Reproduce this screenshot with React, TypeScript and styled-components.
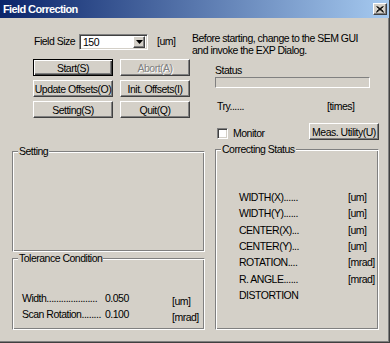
import React from 'react'
import styled, { createGlobalStyle, css } from 'styled-components'

const FACE = '#d4d0c8'
const SHADOW = '#808080'
const DARK = '#404040'

const GlobalStyle = createGlobalStyle`
    html, body {
        margin: 0;
        padding: 0;
        background: ${FACE};
    }
    body {
        font-family: "Liberation Sans", Arial, sans-serif;
        font-size: 10.5px;
        letter-spacing: -0.5px;
        color: #000;
    }
`

const raised = css`
    border: 1px solid;
    border-color: #fff ${DARK} ${DARK} #fff;
    box-shadow: inset -1px -1px ${SHADOW};
    background: ${FACE};
`

const Window = styled.div`
    box-sizing: border-box;
    width: 390px;
    height: 343px;
    background: ${FACE};
    border-right: 1px solid ${DARK};
    border-bottom: 1px solid ${DARK};
    box-shadow: inset -1px -1px ${SHADOW};
    display: flex;
    flex-direction: column;
    overflow: hidden;
`

const TitleBar = styled.div`
    height: 18px;
    flex: none;
    display: flex;
    align-items: center;
    padding: 0 3px 0 3px;
    background: linear-gradient(to right, #0a246a, #a6caf0);
`

const TitleText = styled.span`
    color: #fff;
    font-weight: bold;
    font-size: 11px;
    letter-spacing: -0.6px;
    line-height: 18px;
`

const CloseButton = styled.div`
    ${raised};
    box-sizing: border-box;
    width: 14px;
    height: 12px;
    margin-left: auto;
    margin-right: -1px;
    display: flex;
    align-items: center;
    justify-content: center;
`

const Body = styled.div`
    flex: 1;
    padding: 14px 8px 0 12px;
`

const Header = styled.div`
    display: flex;
    align-items: flex-start;
    height: 24px;
    padding-left: 22px;
`

const FieldLabel = styled.span`
    width: 45px;
    flex: none;
    margin-top: 3px;
    line-height: 12px;
    white-space: nowrap;
`

const Combo = styled.div`
    box-sizing: border-box;
    width: 69px;
    height: 16px;
    margin-top: 2px;
    flex: none;
    display: flex;
    align-items: center;
    background: #fff;
    border: 1px solid;
    border-color: ${SHADOW} #fff #fff ${SHADOW};
    box-shadow: inset 1px 1px ${DARK}, inset -1px -1px ${FACE};
    padding: 0 2px 0 3px;
`

const ComboValue = styled.span`
    flex: 1;
    line-height: 12px;
`

const ComboArrow = styled.div`
    ${raised};
    box-sizing: border-box;
    width: 12px;
    height: 12px;
    display: flex;
    align-items: center;
    justify-content: center;
`

const HeadUnit = styled.span`
    width: 44px;
    flex: none;
    box-sizing: border-box;
    padding-left: 9px;
    margin-top: 3px;
    line-height: 12px;
`

const Note = styled.div`
    line-height: 12px;
    white-space: nowrap;
`

const Main = styled.div`
    display: grid;
    grid-template-columns: 193px 164px;
    column-gap: 10px;
`

const Column = styled.div`
    display: flex;
    flex-direction: column;
`

const ButtonGrid = styled.div`
    display: grid;
    grid-template-columns: 80px 70px;
    grid-auto-rows: 17px;
    column-gap: 7px;
    row-gap: 4px;
    margin: 3px 0 0 21px;
`

const Button = styled.div<{ $default?: boolean; $disabled?: boolean; $width?: number }>`
    ${raised};
    box-sizing: border-box;
    height: 17px;
    ${p => p.$width && `width: ${p.$width}px;`}
    display: flex;
    align-items: center;
    justify-content: center;
    line-height: 12px;
    white-space: nowrap;
    ${p => p.$default && css`
        border-color: #000;
        box-shadow: inset 1px 1px #fff, inset -1px -1px ${DARK}, inset -2px -2px ${SHADOW};
    `}
    ${p => p.$disabled && css`
        color: ${SHADOW};
        text-shadow: 1px 1px #fff;
    `}
`

const Group = styled.div<{ $height: number; $top?: number }>`
    display: flex;
    flex-direction: column;
    height: ${p => p.$height}px;
    margin-top: ${p => p.$top ?? 0}px;
`

const GroupHead = styled.div`
    display: flex;
    height: 12px;
    flex: none;
`

const HeadLine = styled.div<{ $side: 'left' | 'right' }>`
    margin-top: 6px;
    border-top: 1px solid ${SHADOW};
    ${p => p.$side === 'left'
        ? css`
            width: 5px;
            flex: none;
            border-left: 1px solid ${SHADOW};
            box-shadow: inset 1px 1px #fff;
        `
        : css`
            flex: 1;
            border-right: 1px solid #fff;
            box-shadow: inset 0 1px #fff, inset -1px 0 ${SHADOW};
        `}
`

const Legend = styled.span`
    padding: 0 1px;
    line-height: 12px;
    white-space: nowrap;
`

const GroupBody = styled.div<{ $padTop?: number; $padLeft?: number }>`
    flex: 1;
    border-left: 1px solid ${SHADOW};
    border-right: 1px solid #fff;
    border-bottom: 1px solid #fff;
    box-shadow: inset 1px 0 #fff, inset -1px -1px ${SHADOW};
    padding-top: ${p => p.$padTop ?? 0}px;
    padding-left: ${p => p.$padLeft ?? 0}px;
`

const StatusLabel = styled.span`
    margin-top: 8px;
    line-height: 12px;
`

const StatusBox = styled.div`
    box-sizing: border-box;
    width: 155px;
    height: 11px;
    margin-top: 1px;
    border: 1px solid;
    border-color: ${SHADOW} #fff #fff ${SHADOW};
`

const TryRow = styled.div`
    display: grid;
    grid-template-columns: 110px auto;
    margin-top: 12px;
    padding-left: 2px;
    line-height: 12px;
`

const MonitorRow = styled.div`
    display: flex;
    align-items: center;
    height: 17px;
    margin-top: 11px;
    padding-left: 2px;
`

const CheckBox = styled.div`
    box-sizing: border-box;
    width: 11px;
    height: 11px;
    background: #fff;
    border: 1px solid;
    border-color: ${SHADOW} #fff #fff ${SHADOW};
    box-shadow: inset 1px 1px ${DARK}, inset -1px -1px ${FACE};
    margin-top: 3px;
`

const CheckLabel = styled.span`
    margin: 3px auto 0 5px;
    line-height: 12px;
`

const DataTable = styled.div<{ $cols: string; $row: number }>`
    display: grid;
    grid-template-columns: ${p => p.$cols};
    grid-auto-rows: ${p => p.$row}px;
    align-items: center;
    line-height: 12px;
`

const DataCell = styled.span<{ $drop?: number }>`
    white-space: nowrap;
    padding-top: ${p => p.$drop ?? 0}px;
`

const correcting: [string, string][] = [
    ['WIDTH(X)......', '[um]'],
    ['WIDTH(Y)......', '[um]'],
    ['CENTER(X)...', '[um]'],
    ['CENTER(Y)...', '[um]'],
    ['ROTATION....', '[mrad]'],
    ['R. ANGLE......', '[mrad]'],
]

const tolerance = [
    { label: 'Width.....................', value: '0.050', unit: '[um]' },
    { label: 'Scan Rotation........', value: '0.100', unit: '[mrad]' },
]

const GroupBox: React.FC<{
    title: string
    height: number
    top?: number
    padTop?: number
    padLeft?: number
    children?: React.ReactNode
}> = ({ title, height, top, padTop, padLeft, children }) => (
    <Group $height={height} $top={top}>
        <GroupHead>
            <HeadLine $side="left" />
            <Legend>{title}</Legend>
            <HeadLine $side="right" />
        </GroupHead>
        <GroupBody $padTop={padTop} $padLeft={padLeft}>
            {children}
        </GroupBody>
    </Group>
)

export default function App() {
    return (
        <>
            <GlobalStyle />
            <Window>
                <TitleBar>
                    <TitleText>Field Correction</TitleText>
                    <CloseButton>
                        <svg width="8" height="7" viewBox="0 0 8 7">
                            <path d="M0.5 0.5 L7.5 6.5 M1.5 0.5 L7.5 5.5 M7.5 0.5 L0.5 6.5 M6.5 0.5 L0.5 5.5" stroke="#000" strokeWidth="1" fill="none" />
                        </svg>
                    </CloseButton>
                </TitleBar>

                <Body>
                    <Header>
                        <FieldLabel>Field Size</FieldLabel>
                        <Combo>
                            <ComboValue>150</ComboValue>
                            <ComboArrow>
                                <svg width="7" height="4" viewBox="0 0 7 4">
                                    <path d="M0 0 H7 L3.5 4 Z" fill="#000" />
                                </svg>
                            </ComboArrow>
                        </Combo>
                        <HeadUnit>[um]</HeadUnit>
                        <Note>
                            Before starting, change to the SEM GUI<br />
                            and invoke the EXP Dialog.
                        </Note>
                    </Header>

                    <Main>
                        <Column>
                            <ButtonGrid>
                                <Button $default>Start(S)</Button>
                                <Button $disabled>Abort(A)</Button>
                                <Button>Update Offsets(O)</Button>
                                <Button>Init. Offsets(I)</Button>
                                <Button>Setting(S)</Button>
                                <Button>Quit(Q)</Button>
                            </ButtonGrid>

                            <GroupBox title="Setting" height={107} top={27} />

                            <GroupBox title="Tolerance Condition" height={78} padTop={26} padLeft={9}>
                                <DataTable $cols="83px 67px auto" $row={16}>
                                    {tolerance.map(t => (
                                        <React.Fragment key={t.label}>
                                            <DataCell>{t.label}</DataCell>
                                            <DataCell>{t.value}</DataCell>
                                            <DataCell $drop={5}>{t.unit}</DataCell>
                                        </React.Fragment>
                                    ))}
                                </DataTable>
                            </GroupBox>
                        </Column>

                        <Column>
                            <StatusLabel>Status</StatusLabel>
                            <StatusBox />
                            <TryRow>
                                <span>Try......</span>
                                <span>[times]</span>
                            </TryRow>
                            <MonitorRow>
                                <CheckBox />
                                <CheckLabel>Monitor</CheckLabel>
                                <Button $width={70}>Meas. Utility(U)</Button>
                            </MonitorRow>

                            <GroupBox title="Correcting Status" height={187} top={3} padTop={34} padLeft={23}>
                                <DataTable $cols="109px auto" $row={16.33}>
                                    {correcting.map(([label, unit]) => (
                                        <React.Fragment key={label}>
                                            <DataCell>{label}</DataCell>
                                            <DataCell>{unit}</DataCell>
                                        </React.Fragment>
                                    ))}
                                    <DataCell>DISTORTION</DataCell>
                                </DataTable>
                            </GroupBox>
                        </Column>
                    </Main>
                </Body>
            </Window>
        </>
    )
}
